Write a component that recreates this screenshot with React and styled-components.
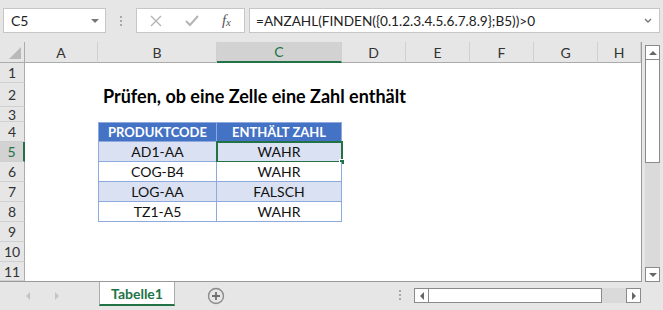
import styled, { createGlobalStyle, css } from "styled-components";

const GlobalStyle = createGlobalStyle`
  html, body { margin: 0; padding: 0; }
  body { background: #ffffff; }
  * { box-sizing: border-box; }
`;

const green = "#217346";
const chrome = "#e6e6e6";
const font = `"Lato", "Noto Sans", sans-serif`;

const columns = ["A", "B", "C", "D", "E", "F", "G", "H"];
const rows = [1, 2, 3, 4, 5, 6, 7, 8, 9, 10, 11];

const tableData = [
  ["AD1-AA", "WAHR"],
  ["COG-B4", "WAHR"],
  ["LOG-AA", "FALSCH"],
  ["TZ1-A5", "WAHR"],
];

export default function App() {
  return (
    <Window>
      <GlobalStyle />
      <FormulaBar>
        <NameBox>
          C5
          <SmallArrow />
        </NameBox>
        <Grip>
          <i />
          <i />
          <i />
        </Grip>
        <FxButtons>
          <svg width="12" height="12" viewBox="0 0 12 12">
            <path d="M1 1 L11 11 M11 1 L1 11" stroke="#b4b4b4" strokeWidth="1.4" />
          </svg>
          <svg width="14" height="12" viewBox="0 0 14 12">
            <path d="M1 6 L5 10 L13 1" stroke="#b4b4b4" strokeWidth="2" fill="none" />
          </svg>
          <Fx>
            f<sub>x</sub>
          </Fx>
        </FxButtons>
        <FormulaInput>
          =ANZAHL(FINDEN({"{"}0.1.2.3.4.5.6.7.8.9{"}"};B5))&gt;0
          <svg width="10" height="8" viewBox="0 0 10 8">
            <path d="M2 2 L5 5 L8 2" stroke="#777" strokeWidth="1.4" fill="none" />
          </svg>
        </FormulaInput>
      </FormulaBar>

      <Main>
        <Sheet>
          <Corner>
            <svg width="12" height="12" viewBox="0 0 12 12">
              <path d="M12 0 L12 12 L0 12 Z" fill="#b9b9b9" />
            </svg>
          </Corner>
          {columns.map((c, i) => (
            <ColHeader key={c} $col={i + 2} $active={c === "C"}>
              {c}
            </ColHeader>
          ))}
          {rows.map((r) => (
            <RowHeader key={r} $row={r + 1} $active={r === 5}>
              {r}
            </RowHeader>
          ))}

          <Title $row={3}>Prüfen, ob eine Zelle eine Zahl enthält</Title>

          <TableCell $row={5} $col={3} $head $first $top>
            PRODUKTCODE
          </TableCell>
          <TableCell $row={5} $col={4} $head $top>
            ENTHÄLT ZAHL
          </TableCell>
          {tableData.map(([code, value], i) => (
            <TableRowCells key={code} code={code} value={value} index={i} />
          ))}
        </Sheet>

        <VScroll>
          <ScrollButton>
            <Tri $dir="up" />
          </ScrollButton>
          <VThumb />
          <VTrack />
          <ScrollButton>
            <Tri $dir="down" />
          </ScrollButton>
        </VScroll>
      </Main>

      <BottomBar>
        <NavArrows>
          <Tri $dir="left" $light />
          <Tri $dir="right" $light />
        </NavArrows>
        <SheetTab>Tabelle1</SheetTab>
        <AddSheet>
          <svg width="18" height="18" viewBox="0 0 18 18">
            <circle cx="9" cy="9" r="7.5" fill="none" stroke="#8a8a8a" strokeWidth="1.4" />
            <path d="M9 5 L9 13 M5 9 L13 9" stroke="#6f6f6f" strokeWidth="1.8" />
          </svg>
        </AddSheet>
        <Spacer />
        <Grip $bottom>
          <i />
          <i />
          <i />
        </Grip>
        <HScroll>
          <ScrollButton>
            <Tri $dir="left" />
          </ScrollButton>
          <HThumb />
          <HTrack />
          <ScrollButton>
            <Tri $dir="right" />
          </ScrollButton>
        </HScroll>
      </BottomBar>
    </Window>
  );
}

function TableRowCells({ code, value, index }) {
  const row = index + 6;
  const shaded = index % 2 === 0;
  return (
    <>
      <TableCell $row={row} $col={3} $first $shaded={shaded}>
        {code}
      </TableCell>
      <TableCell $row={row} $col={4} $shaded={shaded}>
        {value}
        {index === 0 && (
          <Selection>
            <Handle />
          </Selection>
        )}
      </TableCell>
    </>
  );
}

const Window = styled.div`
  width: 663px;
  height: 310px;
  display: flex;
  flex-direction: column;
  background: ${chrome};
  font-family: ${font};
  overflow: hidden;
`;

const FormulaBar = styled.div`
  height: 42px;
  display: flex;
  align-items: flex-start;
  padding: 8px 3px 0 3px;
`;

const NameBox = styled.div`
  width: 103px;
  height: 25px;
  background: #fff;
  border: 1px solid #c6c6c6;
  display: flex;
  align-items: center;
  justify-content: space-between;
  padding: 0 6px 0 7px;
  font-size: 14px;
  color: #222;
`;

const SmallArrow = styled.span`
  width: 0;
  height: 0;
  border-left: 4px solid transparent;
  border-right: 4px solid transparent;
  border-top: 4px solid #777;
`;

const Grip = styled.div`
  width: 30px;
  display: flex;
  flex-direction: column;
  align-items: center;
  gap: 2px;
  padding-top: 8px;
  i {
    width: 2px;
    height: 2px;
    background: #a8a8a8;
  }
  ${(p) =>
    p.$bottom &&
    css`
      width: 28px;
    `}
`;

const FxButtons = styled.div`
  width: 109px;
  height: 25px;
  background: #fff;
  border: 1px solid #c6c6c6;
  display: flex;
  align-items: center;
  justify-content: space-between;
  padding: 0 13px 0 13px;
`;

const Fx = styled.span`
  font-family: "Liberation Serif", serif;
  font-style: italic;
  font-size: 15px;
  color: #555;
  sub {
    font-size: 11px;
    vertical-align: -1px;
  }
`;

const FormulaInput = styled.div`
  flex: 1;
  margin-left: 4px;
  height: 25px;
  background: #fff;
  border: 1px solid #c6c6c6;
  display: flex;
  align-items: center;
  justify-content: space-between;
  padding: 0 6px 0 6px;
  font-size: 13.6px;
  color: #222;
  white-space: nowrap;
`;

const Main = styled.div`
  display: flex;
  height: 240px;
`;

const Sheet = styled.div`
  display: grid;
  grid-template-columns: 25px 73px 119px 125px 64px 64px 64px 64px 43px;
  grid-template-rows: 21px 20px 24px 15px repeat(7, 20px) 19px;
  width: 642px;
  height: 240px;
  background: #fff;
  border-right: 1px solid #9a9a9a;
  border-bottom: 1px solid #9a9a9a;
  overflow: hidden;
`;

const headerBase = css`
  background: ${chrome};
  color: #333;
  font-size: 14px;
  display: flex;
  align-items: center;
  justify-content: center;
`;

const Corner = styled.div`
  ${headerBase};
  grid-row: 1;
  grid-column: 1;
  border-right: 1px solid #ababab;
  border-bottom: 1px solid #ababab;
  justify-content: flex-end;
  align-items: flex-end;
  padding: 0 3px 3px 0;
`;

const ColHeader = styled.div`
  ${headerBase};
  grid-row: 1;
  grid-column: ${(p) => p.$col};
  border-right: 1px solid #d0d0d0;
  border-bottom: 1px solid #ababab;
  ${(p) =>
    p.$active &&
    css`
      background: #d2d2d2;
      color: ${green};
      border-bottom: 2px solid ${green};
    `}
`;

const RowHeader = styled.div`
  ${headerBase};
  grid-column: 1;
  grid-row: ${(p) => p.$row};
  border-right: 1px solid #ababab;
  border-bottom: 1px solid #d0d0d0;
  ${(p) =>
    p.$active &&
    css`
      background: #d2d2d2;
      color: ${green};
      border-right: 2px solid ${green};
    `}
`;

const Title = styled.div`
  grid-row: ${(p) => p.$row};
  grid-column: 3 / span 7;
  display: flex;
  align-items: center;
  padding: 1px 0 0 5px;
  font-size: 18px;
  font-weight: 700;
  color: #000;
  white-space: nowrap;
`;

const TableCell = styled.div`
  position: relative;
  grid-row: ${(p) => p.$row};
  grid-column: ${(p) => p.$col};
  display: flex;
  align-items: center;
  justify-content: center;
  font-size: 14px;
  color: #111;
  border-right: 1px solid #8ea9db;
  border-bottom: 1px solid #8ea9db;
  border-left: ${(p) => (p.$first ? "1px solid #8ea9db" : "none")};
  border-top: ${(p) => (p.$top ? "1px solid #8ea9db" : "none")};
  background: ${(p) => (p.$head ? "#4472c4" : p.$shaded ? "#d9e1f2" : "#fff")};
  ${(p) =>
    p.$head &&
    css`
      color: #fff;
      font-weight: 700;
      font-size: 13px;
    `}
`;

const Selection = styled.div`
  position: absolute;
  top: -1px;
  left: -1px;
  right: -2px;
  bottom: -2px;
  border: 2px solid ${green};
  pointer-events: none;
`;

const Handle = styled.div`
  position: absolute;
  right: -4px;
  bottom: -4px;
  width: 6px;
  height: 6px;
  background: ${green};
  border: 1px solid #fff;
`;

const VScroll = styled.div`
  width: 15px;
  margin-left: 3px;
  padding-top: 3px;
  display: flex;
  flex-direction: column;
`;

const ScrollButton = styled.div`
  width: 15px;
  height: 15px;
  flex: none;
  background: #fff;
  border: 1px solid #8a8a8a;
  display: flex;
  align-items: center;
  justify-content: center;
`;

const VThumb = styled.div`
  height: 103px;
  background: #fff;
  border: 1px solid #8a8a8a;
  border-top: none;
`;

const VTrack = styled.div`
  flex: 1;
  background: #dadada;
`;

const triangles = {
  up: css`
    border-left: 4px solid transparent;
    border-right: 4px solid transparent;
    border-bottom: 4px solid var(--c);
  `,
  down: css`
    border-left: 4px solid transparent;
    border-right: 4px solid transparent;
    border-top: 4px solid var(--c);
  `,
  left: css`
    border-top: 4px solid transparent;
    border-bottom: 4px solid transparent;
    border-right: 4px solid var(--c);
  `,
  right: css`
    border-top: 4px solid transparent;
    border-bottom: 4px solid transparent;
    border-left: 4px solid var(--c);
  `,
};

const Tri = styled.span`
  --c: ${(p) => (p.$light ? "#c4c4c4" : "#666")};
  width: 0;
  height: 0;
  ${(p) => triangles[p.$dir]};
`;

const BottomBar = styled.div`
  flex: 1;
  display: flex;
  align-items: flex-start;
`;

const NavArrows = styled.div`
  width: 99px;
  height: 28px;
  display: flex;
  align-items: center;
  gap: 25px;
  padding-left: 26px;
`;

const SheetTab = styled.div`
  width: 76px;
  height: 24px;
  background: #fff;
  border-left: 1px solid #ababab;
  border-right: 1px solid #ababab;
  border-bottom: 2px solid ${green};
  display: flex;
  align-items: center;
  justify-content: center;
  padding-top: 1px;
  color: ${green};
  font-weight: 700;
  font-size: 14px;
`;

const AddSheet = styled.div`
  width: 82px;
  height: 28px;
  display: flex;
  align-items: center;
  padding-left: 32px;
`;

const Spacer = styled.div`
  flex: 1;
`;

const HScroll = styled.div`
  width: 227px;
  height: 15px;
  margin: 6px 22px 0 0;
  display: flex;
`;

const HThumb = styled.div`
  width: 173px;
  background: #fff;
  border: 1px solid #8a8a8a;
  border-left: none;
`;

const HTrack = styled.div`
  flex: 1;
  background: #dadada;
`;
